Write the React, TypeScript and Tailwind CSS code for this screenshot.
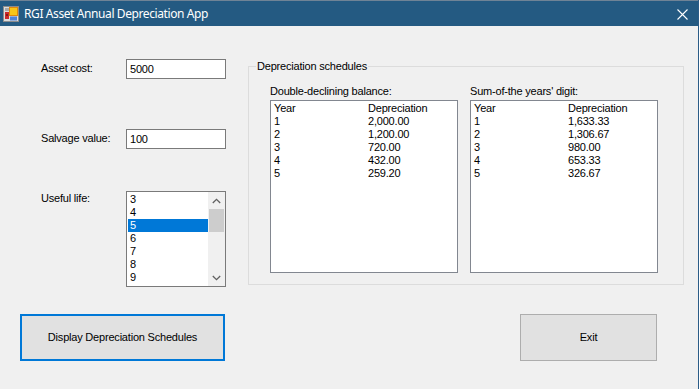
import React from "react";

const rowsDdb = [
  ["1", "2,000.00"],
  ["2", "1,200.00"],
  ["3", "720.00"],
  ["4", "432.00"],
  ["5", "259.20"],
];
const rowsSyd = [
  ["1", "1,633.33"],
  ["2", "1,306.67"],
  ["3", "980.00"],
  ["4", "653.33"],
  ["5", "326.67"],
];

function AppIcon() {
  return (
    <svg width="16" height="16" viewBox="0 0 16 16" className="shrink-0">
      <rect x="0.5" y="0.5" width="15" height="15" fill="#dcdcdc" stroke="#8c8c8c" />
      <rect x="2" y="2" width="4" height="3" fill="#a8a8a8" />
      <rect x="2" y="6" width="4" height="7" fill="#cc2a2a" />
      <rect x="3" y="8" width="2" height="2" fill="#7a2020" />
      <rect x="6.5" y="1.5" width="8" height="8" fill="#f7c518" stroke="#e0890c" />
      <rect x="7" y="10.5" width="7" height="4" fill="#4f82d8" />
    </svg>
  );
}

function ListBox({ rows }: { rows: string[][] }) {
  return (
    <div className="w-[188px] h-[173px] border border-[#828790] bg-white pl-[3px] pt-[1px]">
      <div className="flex h-[13px] leading-[13px]">
        <span className="w-[94px]">Year</span>
        <span>Depreciation</span>
      </div>
      {rows.map((r) => (
        <div key={r[0]} className="flex h-[13px] leading-[13px]">
          <span className="w-[94px]">{r[0]}</span>
          <span>{r[1]}</span>
        </div>
      ))}
    </div>
  );
}

export default function App() {
  const lifeItems = ["3", "4", "5", "6", "7", "8", "9"];
  return (
    <div
      className="w-[699px] h-[389px] bg-[#f0f0f0] border-r border-[#2b5c87] flex flex-col overflow-hidden text-black text-[11px] leading-[13px] tracking-[-0.2px]"
      style={{ fontFamily: '"Liberation Sans", Arial, sans-serif' }}
    >
      {/* Title bar */}
      <div className="h-[26px] bg-[#245a82] border-t border-[#6f8396] flex items-center shrink-0">
        <div className="ml-[3px] mt-[1px]">
          <AppIcon />
        </div>
        <span
          className="ml-[5px] text-white text-[12px] leading-[16px] tracking-[-0.4px]"
          style={{ fontFamily: '"Noto Sans", "Open Sans", sans-serif' }}
        >
          RGI Asset Annual Depreciation App
        </span>
        <div className="ml-auto mr-[10px] mt-[1px]">
          <svg width="11" height="11" viewBox="0 0 11 11">
            <path d="M0.5 0.5 L10.5 10.5 M10.5 0.5 L0.5 10.5" stroke="#ffffff" strokeWidth="1.1" fill="none" />
          </svg>
        </div>
      </div>

      {/* Top area */}
      <div className="h-[262px] flex items-start shrink-0">
        {/* Left column */}
        <div className="w-[248px] flex flex-col pl-[41px]">
          <div className="mt-[33px] flex items-center h-[20px]">
            <span className="w-[85px] -mt-[1px]">Asset cost:</span>
            <div className="w-[100px] h-[20px] border border-[#7a7a7a] bg-white pl-[3px] flex items-center">
              5000
            </div>
          </div>
          <div className="mt-[50px] flex items-center h-[20px]">
            <span className="w-[85px] -mt-[1px]">Salvage value:</span>
            <div className="w-[100px] h-[20px] border border-[#7a7a7a] bg-white pl-[3px] flex items-center">
              100
            </div>
          </div>
          <div className="mt-[42px] flex items-start">
            <span className="w-[85px] pt-[1px]">Useful life:</span>
            <div className="w-[100px] h-[96px] border border-[#7a7a7a] bg-white flex">
              <div className="w-[81px] pt-[1px] pl-[1px]">
                {lifeItems.map((it) => (
                  <div
                    key={it}
                    className={
                      "h-[13px] leading-[13px] pl-[2px] " +
                      (it === "5" ? "bg-[#0078d7] text-white" : "")
                    }
                  >
                    {it}
                  </div>
                ))}
              </div>
              <div className="w-[17px] h-[94px] bg-[#f0f0f0] flex flex-col">
                <div className="h-[17px] flex items-center justify-center">
                  <svg width="9" height="6" viewBox="0 0 9 6">
                    <path d="M0.8 5 L4.5 1.3 L8.2 5" stroke="#606060" strokeWidth="1.3" fill="none" />
                  </svg>
                </div>
                <div className="mx-auto w-[15px] h-[23px] bg-[#cdcdcd]" />
                <div className="flex-1" />
                <div className="h-[17px] flex items-center justify-center">
                  <svg width="9" height="6" viewBox="0 0 9 6">
                    <path d="M0.8 1 L4.5 4.7 L8.2 1" stroke="#606060" strokeWidth="1.3" fill="none" />
                  </svg>
                </div>
              </div>
            </div>
          </div>
        </div>

        {/* Group box */}
        <fieldset className="mt-[34px] w-[436px] border border-[#dcdcdc] pl-[7px] pb-[11px]">
          <legend className="px-[1px] leading-[13px]">Depreciation schedules</legend>
          <div className="ml-[14px] pt-[12px] flex gap-[12px]">
            <div className="flex flex-col">
              <span className="h-[13px] leading-[13px]">Double-declining balance:</span>
              <div className="mt-[2px]">
                <ListBox rows={rowsDdb} />
              </div>
            </div>
            <div className="flex flex-col">
              <span className="h-[13px] leading-[13px]">Sum-of-the years' digit:</span>
              <div className="mt-[2px]">
                <ListBox rows={rowsSyd} />
              </div>
            </div>
          </div>
        </fieldset>
      </div>

      {/* Buttons */}
      <div className="pt-[26px] flex items-start">
        <button className="ml-[20px] w-[205px] h-[47px] border-2 border-[#0078d7] bg-[#e1e1e1] flex items-center justify-center">
          Display Depreciation Schedules
        </button>
        <button className="ml-[295px] w-[137px] h-[47px] border border-[#adadad] bg-[#e1e1e1] flex items-center justify-center">
          Exit
        </button>
      </div>
    </div>
  );
}
